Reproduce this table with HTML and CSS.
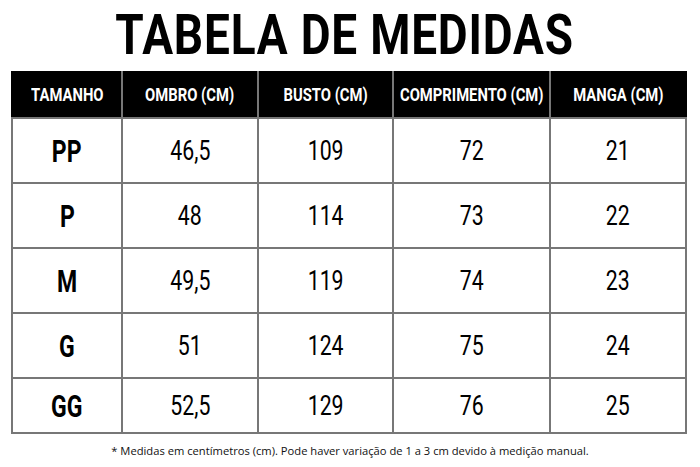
FILE: index.html
```html
<!DOCTYPE html>
<html lang="pt">
<head>
<meta charset="utf-8">
<link rel="stylesheet" href="styles.css">
</head>
<body>
<div class="page">
  <h1 class="title"><span class="cond title-text">TABELA DE MEDIDAS</span></h1>
  <table class="sizes">
    <thead>
      <tr>
        <th class="c1"><span class="cond">TAMANHO</span></th>
        <th class="c2"><span class="cond">OMBRO (CM)</span></th>
        <th class="c3"><span class="cond">BUSTO (CM)</span></th>
        <th class="c4"><span class="cond">COMPRIMENTO (CM)</span></th>
        <th class="c5"><span class="cond">MANGA (CM)</span></th>
      </tr>
    </thead>
    <tbody>
      <tr><td class="size"><span class="cond">PP</span></td><td><span class="cond">46,5</span></td><td><span class="cond">109</span></td><td><span class="cond">72</span></td><td><span class="cond">21</span></td></tr>
      <tr><td class="size"><span class="cond">P</span></td><td><span class="cond">48</span></td><td><span class="cond">114</span></td><td><span class="cond">73</span></td><td><span class="cond">22</span></td></tr>
      <tr><td class="size"><span class="cond">M</span></td><td><span class="cond">49,5</span></td><td><span class="cond">119</span></td><td><span class="cond">74</span></td><td><span class="cond">23</span></td></tr>
      <tr><td class="size"><span class="cond">G</span></td><td><span class="cond">51</span></td><td><span class="cond">124</span></td><td><span class="cond">75</span></td><td><span class="cond">24</span></td></tr>
      <tr class="last"><td class="size"><span class="cond">GG</span></td><td><span class="cond">52,5</span></td><td><span class="cond">129</span></td><td><span class="cond">76</span></td><td><span class="cond">25</span></td></tr>
    </tbody>
  </table>
  <p class="note">* Medidas em centímetros (cm). Pode haver variação de 1 a 3 cm devido à medição manual.</p>
</div>
</body>
</html>
```
FILE: styles.css
```css
html, body {
  margin: 0;
  padding: 0;
  background: #ffffff;
}
.page {
  width: 700px;
  height: 467px;
  overflow: hidden;
  font-family: Roboto, "Liberation Sans", sans-serif;
  color: #000;
}
.cond {
  display: inline-block;
  margin: 0 -40px;
  transform: scaleX(0.8);
  transform-origin: center;
  white-space: nowrap;
}
.title {
  margin: 0;
  padding-right: 10px;
  height: 71px;
  text-align: center;
  font-size: 56px;
  font-weight: 700;
  line-height: 70px;
  letter-spacing: 1px;
}
.title-text {
  transform: scaleX(0.82);
}
.sizes {
  margin-left: 11px;
  width: 676px;
  border-collapse: collapse;
  table-layout: fixed;
}
.sizes th, .sizes td {
  border: 2px solid #777;
  text-align: center;
  vertical-align: middle;
  padding: 0;
}
.sizes th {
  background: #000;
  color: #fff;
  height: 44px;
  font-size: 18.5px;
  font-weight: 700;
  border-top-color: #000;
}
.sizes th.c1 { width: 108px; border-left-color: #000; }
.sizes th.c2 { width: 134px; }
.sizes th.c3 { width: 133px; }
.sizes th.c4 { width: 155px; }
.sizes th.c5 { border-right-color: #000; }
.sizes td {
  height: 63px;
  font-size: 28px;
  font-weight: 400;
}
.sizes td .cond {
  transform: scaleX(0.76);
}
.sizes td.size {
  font-size: 32px;
  font-weight: 700;
}
.sizes td.size .cond {
  transform: scaleX(0.72);
}
.sizes tr.last td {
  height: 53px;
}
.note {
  margin: 9px 0 0;
  text-align: center;
  font-family: "Open Sans", "Noto Sans", sans-serif;
  font-size: 11.2px;
  color: #111;
}
```
